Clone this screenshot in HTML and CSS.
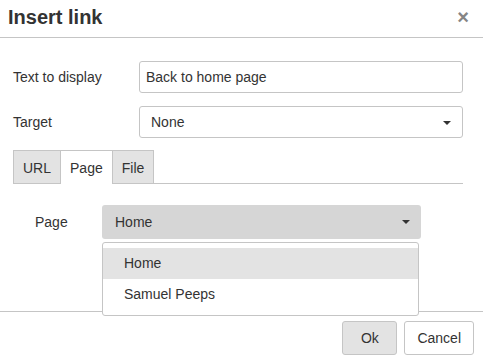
FILE: index.html
```html
<!DOCTYPE html>
<html lang="en">
  <head>
    <meta charset="UTF-8" />
    <title>Insert link</title>
    <link rel="stylesheet" href="styles.css">
  </head>
  <body>
    <div class="dialog">
      <div class="dialog-head">
        <h1>Insert link</h1>
        <span class="close">&times;</span>
      </div>

      <div class="dialog-body">
        <div class="row">
          <label>Text to display</label>
          <div class="field">Back to home page</div>
        </div>
        <div class="row">
          <label>Target</label>
          <div class="field select">None <span class="caret"></span></div>
        </div>

        <div class="tabs">
          <div class="tab">URL</div>
          <div class="tab active">Page</div>
          <div class="tab">File</div>
        </div>

        <div class="page-row">
          <label>Page</label>
          <div class="page-select">
            <div class="field select grey">Home <span class="caret"></span></div>
            <ul class="menu">
              <li class="hover">Home</li>
              <li>Samuel Peeps</li>
            </ul>
          </div>
        </div>
      </div>

      <div class="dialog-foot">
        <button class="btn primary">Ok</button>
        <button class="btn">Cancel</button>
      </div>
    </div>
  </body>
</html>
```

FILE: styles.css
```css
body {
    margin: 0;
    font-family: "Liberation Sans", Arial, sans-serif;
    font-size: 14px;
    color: #333;
    background-color: white;
}

.dialog {
    width: 483px;
    height: 364px;
    display: flex;
    flex-direction: column;
}

/* Header */
.dialog-head {
    height: 37px;
    border-bottom: 1px solid #c5c5c5;
    display: flex;
    align-items: center;
    justify-content: space-between;
    padding: 0 14px 0 8px;
}

.dialog-head h1 {
    margin: 0;
    font-size: 20px;
    font-weight: bold;
    color: #333;
    position: relative;
    top: -1px;
}

.close {
    font-size: 20px;
    font-weight: bold;
    color: #858585;
    position: relative;
    top: -1px;
}

/* Body */
.dialog-body {
    padding: 23px 20px 0 13px;
    flex: 1;
}

.row {
    display: flex;
    align-items: center;
    margin-bottom: 13px;
}

.row label {
    width: 126px;
}

.field {
    flex: 1;
    height: 30px;
    line-height: 30px;
    border: 1px solid #c5c5c5;
    border-radius: 3px;
    padding: 0 6px;
    position: relative;
    background-color: white;
}

.select {
    padding-left: 11px;
}

.caret {
    position: absolute;
    right: 11px;
    top: 14px;
    border-left: 4px solid transparent;
    border-right: 4px solid transparent;
    border-top: 4px solid #333;
}

/* Tabs */
.tabs {
    display: flex;
    border-bottom: 1px solid #c5c5c5;
    margin-top: -1px;
}

.tab {
    height: 32px;
    line-height: 34px;
    padding: 0 9px;
    border: 1px solid #c5c5c5;
    border-bottom: none;
    background-color: #e3e3e3;
    margin-left: -1px;
}

.tab:first-child {
    margin-left: 0;
}

.tab.active {
    background-color: white;
    margin-bottom: -1px;
    height: 33px;
}

/* Page selector */
.page-row {
    display: flex;
    align-items: center;
    margin-top: 21px;
    padding-left: 22px;
}

.page-row label {
    width: 67px;
}

.page-select {
    position: relative;
    width: 319px;
}

.grey {
    height: 34px;
    line-height: 34px;
    border: none;
    background-color: #d6d6d6;
    padding-left: 13px;
}

.grey .caret {
    top: 15px;
}

.menu {
    position: absolute;
    top: 37px;
    left: 0;
    width: 315px;
    margin: 0;
    padding: 5px 0;
    list-style: none;
    background-color: white;
    border: 1px solid #c5c5c5;
    border-radius: 3px;
    z-index: 2;
}

.menu li {
    height: 31px;
    line-height: 31px;
    padding-left: 21px;
}

.menu li.hover {
    background-color: #e3e3e3;
}

/* Footer */
.dialog-foot {
    border-top: 1px solid #c5c5c5;
    height: 52px;
    display: flex;
    justify-content: flex-end;
    align-items: center;
    gap: 7px;
    padding-right: 9px;
}

.btn {
    font-family: "Liberation Sans", Arial, sans-serif;
    font-size: 14px;
    color: #333;
    height: 34px;
    padding: 0 12px;
    border: 1px solid #c5c5c5;
    border-radius: 3px;
    background-color: white;
}

.btn.primary {
    background-color: #e3e3e3;
    width: 55px;
}
```
